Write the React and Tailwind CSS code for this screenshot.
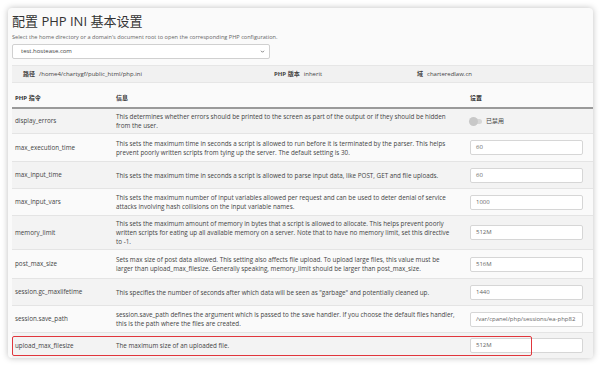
const rows = [
  { name: 'display_errors', h: 'h-[25px]', desc: 'This determines whether errors should be printed to the screen as part of the output or if they should be hidden from the user.', toggle: true },
  { name: 'max_execution_time', h: 'h-[28px]', desc: 'This sets the maximum time in seconds a script is allowed to run before it is terminated by the parser. This helps prevent poorly written scripts from tying up the server. The default setting is 30.', value: '60' },
  { name: 'max_input_time', h: 'h-[27px]', desc: 'This sets the maximum time in seconds a script is allowed to parse input data, like POST, GET and file uploads.', value: '60' },
  { name: 'max_input_vars', h: 'h-[27px]', desc: 'This sets the maximum number of input variables allowed per request and can be used to deter denial of service attacks involving hash collisions on the input variable names.', value: '1000' },
  { name: 'memory_limit', h: 'h-[34px]', desc: 'This sets the maximum amount of memory in bytes that a script is allowed to allocate. This helps prevent poorly written scripts for eating up all available memory on a server. Note that to have no memory limit, set this directive to -1.', value: '512M' },
  { name: 'post_max_size', h: 'h-[29px]', desc: 'Sets max size of post data allowed. This setting also affects file upload. To upload large files, this value must be larger than upload_max_filesize. Generally speaking, memory_limit should be larger than post_max_size.', value: '516M' },
  { name: 'session.gc_maxlifetime', h: 'h-[27px]', desc: 'This specifies the number of seconds after which data will be seen as "garbage" and potentially cleaned up.', value: '1440' },
  { name: 'session.save_path', h: 'h-[27px]', desc: 'session.save_path defines the argument which is passed to the save handler. If you choose the default files handler, this is the path where the files are created.', value: '/var/cpanel/php/sessions/ea-php82' },
  { name: 'upload_max_filesize', h: 'h-[26px]', desc: 'The maximum size of an uploaded file.', value: '512M', mark: true },
];

function Row({ row, i }) {
  const bg = i % 2 === 0 ? 'bg-[#f3f3f3]' : 'bg-[#fafafa]';
  return (
    <div className={`relative grid grid-cols-[101px_354px_1fr] items-center border-b border-[#e4e4e4] ${row.h} ${bg}`}>
      <div className="pl-[3px] text-[6.3px] text-[#444]">{row.name}</div>
      <div className="pl-[3px] pr-[12px] text-[6.3px] leading-[9px] text-[#444]">{row.desc}</div>
      <div className="pl-[3px] pr-[10px]">
        {row.toggle ? (
          <div className="flex items-center gap-[4px]">
            <div className="relative h-[5px] w-[12px] rounded-full bg-[#d8d8d8]">
              <div className="absolute left-[-1px] top-[-2px] h-[9px] w-[9px] rounded-full bg-[#c8c8c8]" />
            </div>
            <span className="text-[6px] text-[#444]">已禁用</span>
          </div>
        ) : (
          <div className="flex h-[15px] w-[113px] items-center overflow-hidden whitespace-nowrap rounded-[2px] border border-[#d6d6d6] bg-white pl-[5px] text-[6px] text-[#666]">
            {row.value}
          </div>
        )}
      </div>
      {row.mark && (
        <div className="absolute left-0 top-[3px] h-[20px] w-[520px] rounded-[2px] border-[1.5px] border-[#e0363c]" />
      )}
    </div>
  );
}

export default function App() {
  return (
    <div className="h-[370px] w-[604px] bg-white pl-[8px] pt-[8px] font-['Open_Sans','Noto_Sans_CJK_SC',sans-serif]">
      <div className="h-[350px] w-[585px] overflow-hidden rounded-[4px] bg-[#fafafa] pl-[4px] shadow-[0_0_6px_rgba(0,0,0,0.25)]">
        <h1 className="pt-[4px] text-[13px] leading-[18px] text-[#333]">配置 PHP INI 基本设置</h1>
        <p className="mt-[3px] text-[5.6px] leading-[8px] text-[#666]">
          Select the home directory or a domain's document root to open the corresponding PHP configuration.
        </p>
        <div className="mt-[3px] flex h-[15px] w-[258px] items-center justify-between rounded-[2px] border border-[#d0d0d0] bg-white pl-[8px] pr-[4px]">
          <span className="text-[6px] text-[#444]">test.hostease.com</span>
          <svg width="5" height="5" viewBox="0 0 10 10">
            <path d="M2 3.5 L5 6.5 L8 3.5" fill="none" stroke="#555" strokeWidth="1.5" />
          </svg>
        </div>
        <div className="mt-[6px] grid h-[18px] grid-cols-[251px_143px_1fr] items-center border-y border-[#e6e6e6] bg-[#f1f1f1] pl-[11px] text-[6px] text-[#444]">
          <div><span className="mr-[4px] font-bold">路径</span>/home4/chartygf/public_html/php.ini</div>
          <div><span className="mr-[4px] font-bold">PHP 版本</span>inherit</div>
          <div><span className="mr-[4px] font-bold">域</span>charteredlaw.cn</div>
        </div>
        <div className="mt-[7px] grid h-[19px] grid-cols-[101px_354px_1fr] items-center border-b-2 border-[#9a9a9a] text-[6px] font-bold text-[#333]">
          <div className="pl-[3px]">PHP 指令</div>
          <div className="pl-[3px]">信息</div>
          <div className="pl-[3px]">设置</div>
        </div>
        {rows.map((row, i) => (
          <Row key={row.name} row={row} i={i} />
        ))}
      </div>
    </div>
  );
}
